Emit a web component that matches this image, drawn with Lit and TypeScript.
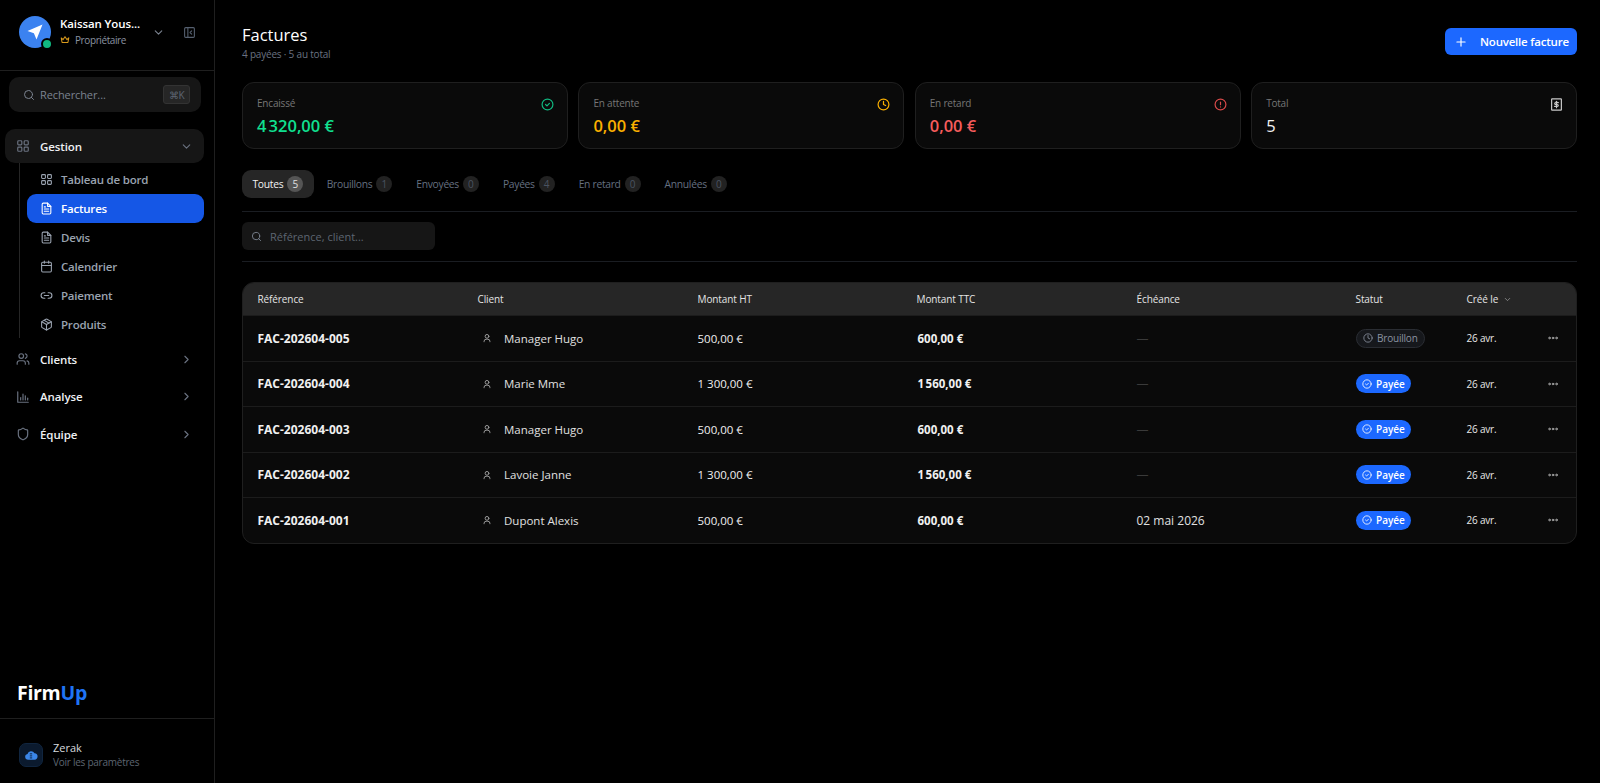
import { LitElement, html, css, svg } from "lit";
import { customElement } from "lit/decorators.js";

const ic = (paths: any, size = 14, sw = 2, cls = "") =>
  html`<svg class=${cls} width=${size} height=${size} viewBox="0 0 24 24" fill="none" stroke="currentColor" stroke-width=${sw} stroke-linecap="round" stroke-linejoin="round">${paths}</svg>`;

const P = {
  grid: svg`<rect x="3" y="3" width="7" height="7" rx="1.5"/><rect x="14" y="3" width="7" height="7" rx="1.5"/><rect x="3" y="14" width="7" height="7" rx="1.5"/><rect x="14" y="14" width="7" height="7" rx="1.5"/>`,
  file: svg`<path d="M14 2H6a2 2 0 0 0-2 2v16a2 2 0 0 0 2 2h12a2 2 0 0 0 2-2V8z"/><path d="M14 2v6h6"/><path d="M16 13H8"/><path d="M16 17H8"/><path d="M10 9H8"/>`,
  cal: svg`<path d="M8 2v4"/><path d="M16 2v4"/><rect x="3" y="4" width="18" height="18" rx="2"/><path d="M3 10h18"/>`,
  link: svg`<path d="M9 17H7A5 5 0 0 1 7 7h2"/><path d="M15 7h2a5 5 0 1 1 0 10h-2"/><line x1="8" y1="12" x2="16" y2="12"/>`,
  box: svg`<path d="M21 8a2 2 0 0 0-1-1.73l-7-4a2 2 0 0 0-2 0l-7 4A2 2 0 0 0 3 8v8a2 2 0 0 0 1 1.73l7 4a2 2 0 0 0 2 0l7-4A2 2 0 0 0 21 16z"/><path d="m3.3 7 8.7 5 8.7-5"/><path d="M12 22V12"/><path d="m7.5 4.27 9 5.15"/>`,
  users: svg`<path d="M16 21v-2a4 4 0 0 0-4-4H6a4 4 0 0 0-4 4v2"/><circle cx="9" cy="7" r="4"/><path d="M22 21v-2a4 4 0 0 0-3-3.87"/><path d="M16 3.13a4 4 0 0 1 0 7.75"/>`,
  chart: svg`<path d="M3 3v18h18"/><path d="M8 17v-4"/><path d="M12 17V7"/><path d="M16 17v-7"/><path d="M20 17v-3"/>`,
  shield: svg`<path d="M20 13c0 5-3.5 7.5-7.66 8.95a1 1 0 0 1-.67-.01C7.5 20.5 4 18 4 13V6a1 1 0 0 1 1-1c2 0 4.5-1.2 6.24-2.72a1.17 1.17 0 0 1 1.52 0C14.51 3.81 17 5 19 5a1 1 0 0 1 1 1z"/>`,
  down: svg`<path d="m6 9 6 6 6-6"/>`,
  right: svg`<path d="m9 18 6-6-6-6"/>`,
  search: svg`<circle cx="11" cy="11" r="8"/><path d="m21 21-4.3-4.3"/>`,
  panel: svg`<rect x="3" y="3" width="18" height="18" rx="2"/><path d="M9 3v18"/><path d="m16 15-3-3 3-3"/>`,
  check: svg`<circle cx="12" cy="12" r="10"/><path d="m8.5 12 2.5 2.5 4.5-4.500"/>`,
  clock: svg`<circle cx="12" cy="12" r="10"/><path d="M12 6v6l4 2"/>`,
  alert: svg`<circle cx="12" cy="12" r="10"/><line x1="12" y1="7.5" x2="12" y2="12.5"/><line x1="12" y1="16.5" x2="12.01" y2="16.5"/>`,
  bill: svg`<rect x="3" y="1.500" width="18" height="21" rx="1"/><path d="M15.500 8.500H10.500a1.750 1.750 0 0 0 0 3.500h3a1.750 1.750 0 0 1 0 3.500H8.500"/><path d="M12 6v12"/>`,
  plus: svg`<path d="M5 12h14"/><path d="M12 5v14"/>`,
  user: svg`<circle cx="12" cy="8" r="4.500"/><path d="M5 21v-1a5 5 0 0 1 5-5h4a5 5 0 0 1 5 5v1"/>`,
  more: svg`<circle cx="5" cy="12" r="1.600"/><circle cx="12" cy="12" r="1.600"/><circle cx="19" cy="12" r="1.600"/>`,
};

const SUB = [
  ["Tableau de bord", P.grid, false],
  ["Factures", P.file, true],
  ["Devis", P.file, false],
  ["Calendrier", P.cal, false],
  ["Paiement", P.link, false],
  ["Produits", P.box, false],
] as const;

const CARDS = [
  ["Encaissé", "4\u202f320,00 €", "green", P.check],
  ["En attente", "0,00 €", "orange", P.clock],
  ["En retard", "0,00 €", "red", P.alert],
  ["Total", "5", "white", P.bill],
] as const;

const TABS = [
  ["Toutes", 5],
  ["Brouillons", 1],
  ["Envoyées", 0],
  ["Payées", 4],
  ["En retard", 0],
  ["Annulées", 0],
] as const;

const ROWS = [
  ["FAC-202604-005", "Manager Hugo", "500,00 €", "600,00 €", "—", false],
  ["FAC-202604-004", "Marie Mme", "1 300,00 €", "1\u202f560,00 €", "—", true],
  ["FAC-202604-003", "Manager Hugo", "500,00 €", "600,00 €", "—", true],
  ["FAC-202604-002", "Lavoie Janne", "1 300,00 €", "1\u202f560,00 €", "—", true],
  ["FAC-202604-001", "Dupont Alexis", "500,00 €", "600,00 €", "02 mai 2026", true],
] as const;

@customElement("app-root")
export class AppRoot extends LitElement {
  static styles = css`
    :host {
      display: flex;
      width: 100%;
      height: 783px;
      background: #000;
      color: #fff;
      font-family: "Open Sans", "Noto Sans", "Liberation Sans", sans-serif;
      overflow: hidden;
    }
    svg { flex: none; display: block; }
    .side {
      width: 215px;
      flex: none;
      box-sizing: border-box;
      border-right: 1px solid #1f1f1f;
      display: flex;
      flex-direction: column;
    }
    .user {
      height: 71px;
      box-sizing: border-box;
      border-bottom: 1px solid #1f1f1f;
      display: flex;
      align-items: center;
      padding: 0 0 6px 19px;
    }
    .avatar {
      width: 32px;
      height: 32px;
      border-radius: 50%;
      background: #3b82f0;
      position: relative;
      display: flex;
      align-items: center;
      justify-content: center;
      flex: none;
    }
    .dot {
      position: absolute;
      right: -2px;
      bottom: -2px;
      width: 8px;
      height: 8px;
      border-radius: 50%;
      background: #10b981;
      border: 2px solid #000;
    }
    .uinfo { margin-left: 9px; width: 92px; }
    .uname { font-size: 11.5px; font-weight: 600; line-height: 16px; white-space: nowrap; letter-spacing: -0.1px; }
    .urole { font-size: 10px; color: #8b93a1; display: flex; align-items: center; gap: 5px; line-height: 16px; letter-spacing: -0.4px; }
    .crown { color: #d99a1c; }
    .uchev { color: #7b8390; margin-left: 0; }
    .upanel { color: #566070; margin-left: 18px; }
    .sbox {
      margin: 6px 13px 0 9px;
      height: 35px;
      box-sizing: border-box;
      background: #161616;
      border-radius: 10px;
      display: flex;
      align-items: center;
      padding: 0 11px 0 14px;
      color: #7b8390;
      font-size: 11px;
      letter-spacing: -0.1px;
      gap: 5px;
    }
    .kbd {
      margin-left: auto;
      width: 27px;
      height: 19px;
      box-sizing: border-box;
      border: 1px solid #333;
      border-radius: 3px;
      background: #262626;
      color: #5d6571;
      font-size: 10px;
      display: flex;
      align-items: center;
      justify-content: center;
    }
    .nav { margin: 17px 10px 0 5px; display: flex; flex-direction: column; }
    .group {
      height: 34px;
      display: flex;
      align-items: center;
      padding: 0 11px 0 11px;
      border-radius: 10px;
      font-size: 11.5px;
      font-weight: 600;
      letter-spacing: -0.1px;
      color: #eef0f3;
      gap: 10px;
      flex: none;
    }
    .group.open { background: #161616; }
    .group .gi { color: #6a7280; }
    .group .ch { margin-left: auto; color: #6a7280; }
    .gsp { height: 37.5px; }
    .subs {
      margin-left: 14px;
      border-left: 1px solid #262626;
      padding: 2px 0 0 7px;
      height: 175px;
      box-sizing: border-box;
      margin-bottom: 2.500px;
      display: flex;
      flex-direction: column;
    }
    .sub {
      height: 29px;
      flex: none;
      box-sizing: border-box;
      display: flex;
      align-items: center;
      gap: 8px;
      padding-left: 13px;
      border-radius: 9px;
      font-size: 11.5px;
      font-weight: 600;
      letter-spacing: -0.2px;
      color: #9aa3b0;
    }
    .sub.on { background: #1557e6; color: #fff; }
    .logo {
      margin-top: auto;
      padding: 0 0 11px 17px;
      font-size: 19.5px;
      font-weight: 700;
      line-height: 28px;
      letter-spacing: -0.3px;
    }
    .logo span { color: #1f74f5; }
    .foot {
      height: 65px;
      box-sizing: border-box;
      border-top: 1px solid #1f1f1f;
      display: flex;
      align-items: center;
      padding: 8px 0 0 19px;
      gap: 10px;
    }
    .ficon {
      width: 24px;
      height: 24px;
      border-radius: 7px;
      background: #0b1a2e;
      border: 1px solid #10253f;
      box-sizing: border-box;
      display: flex;
      align-items: center;
      justify-content: center;
      color: #3b86e8;
    }
    .fname { font-size: 11px; color: #d6d9de; line-height: 14px; font-weight: 500; }
    .fsub { font-size: 10px; color: #5d6571; line-height: 14px; letter-spacing: -0.25px; }

    .main {
      flex: 1;
      min-width: 0;
      padding: 0 23px 0 27px;
      display: flex;
      flex-direction: column;
    }
    .top { display: flex; justify-content: space-between; align-items: flex-start; padding-top: 23px; height: 82px; box-sizing: border-box; }
    h1 { margin: 0; font-size: 16.5px; font-weight: 500; line-height: 24px; }
    .tsub { font-size: 10px; color: #6a7280; line-height: 14px; letter-spacing: -0.2px; }
    .btn {
      margin-top: 5px;
      width: 132px;
      height: 27px;
      box-sizing: border-box;
      background: #1c68ff;
      border-radius: 6px;
      display: flex;
      align-items: center;
      gap: 12px;
      padding-left: 9px;
      font-size: 11.5px;
      font-weight: 600;
      letter-spacing: -0.2px;
      white-space: nowrap;
    }
    .cards { display: grid; grid-template-columns: repeat(4, 1fr); gap: 10.5px; }
    .card {
      height: 67px;
      box-sizing: border-box;
      background: #0a0a0a;
      border: 1px solid #1f1f1f;
      border-radius: 12px;
      padding: 13px 13px 13px 14px;
      display: flex;
      justify-content: space-between;
    }
    .clabel { font-size: 10px; color: #767676; line-height: 14px; letter-spacing: -0.2px; }
    .cval { font-size: 16.5px; font-weight: 600; line-height: 22px; margin-top: 5px; white-space: nowrap; }
    .cval.white { font-weight: 500; }
    .green { color: #10e090; }
    .orange { color: #fbb000; }
    .red { color: #f55c5c; }
    .white { color: #f2f2f2; }
    .cardic { margin-top: 2px; }
    .card .green.cardic { color: #10b981; }
    .card .red.cardic { color: #d94a4a; }
    .card .white.cardic { color: #c8c8c8; }
    .tabs {
      margin-top: 21px;
      padding-bottom: 13px;
      border-bottom: 1px solid #1a1d22;
      display: flex;
      gap: 2px;
    }
    .tab {
      height: 28px;
      box-sizing: border-box;
      padding: 0 11px;
      border-radius: 9px;
      display: flex;
      align-items: center;
      gap: 4px;
      font-size: 10.300px;
      letter-spacing: -0.3px;
      color: #667080;
      white-space: nowrap;
    }
    .tab.on { background: #262626; color: #f2f2f2; font-weight: 500; padding: 0 10.500px; }
    .cnt {
      width: 16px;
      height: 16px;
      border-radius: 50%;
      background: #222;
      color: #4a5361;
      font-size: 10px;
      letter-spacing: 0;
      display: flex;
      align-items: center;
      justify-content: center;
    }
    .tab.on .cnt { background: #555; color: #e0e0e0; }
    .filter {
      padding: 10px 0 11px;
      border-bottom: 1px solid #1a1d22;
    }
    .fbox {
      width: 193px;
      height: 28px;
      box-sizing: border-box;
      background: #161616;
      border-radius: 6px;
      display: flex;
      align-items: center;
      gap: 8px;
      padding-left: 9px;
      color: #5d6571;
      font-size: 11px;
    }
    .fbox svg { color: #7b8390; }
    .table {
      margin-top: 20px;
      border: 1px solid #1f1f1f;
      border-radius: 12px;
      overflow: hidden;
      background: #0a0a0a;
    }
    .row {
      display: grid;
      grid-template-columns: 220px 220px 219px 220px 219px 111px 80px 1fr;
      padding-left: 14.5px;
      align-items: center;
      height: 45.5px;
      box-sizing: border-box;
      border-top: 1px solid #1c1c1c;
      font-size: 12px;
      color: #f0f0f0;
    }
    .row.head {
      height: 32px;
      border-top: none;
      background: #262626;
      font-size: 10px;
      letter-spacing: -0.1px;
      color: #e4e4e4;
    }
    .ref { font-weight: 700; font-size: 12px; }
    .client { display: flex; align-items: center; gap: 12px; padding-left: 4.5px; color: #e0e0e0; font-size: 11.5px; }
    .client svg { color: #999; }
    .ttc { font-weight: 700; font-size: 11.5px; padding-left: 1px; }
    .ht { font-size: 11.5px; }
    .dash { color: #3a3a3a; }
    .date { font-size: 12px; color: #e0e0e0; }
    .badge {
      display: inline-flex;
      align-items: center;
      height: 19px;
      box-sizing: border-box;
      gap: 4px;
      padding: 0 6.500px;
      border-radius: 10px;
      font-size: 10px;
      font-weight: 600;
      width: max-content;
    }
    .badge.paid { background: #1c68ff; color: #fff; }
    .badge.draft { background: #16181c; border: 1px solid #2a2d33; color: #8b93a1; font-weight: 500; letter-spacing: -0.2px; }
    .created { font-size: 10px; color: #e8e8e8; letter-spacing: -0.2px; }
    .hsort { display: flex; align-items: center; gap: 5px; }
    .hsort svg { color: #999; }
    .more { color: #aaa; }
  `;

  render() {
    return html`
      <aside class="side">
        <div class="user">
          <div class="avatar">
            <svg width="18" height="18" viewBox="0 0 24 24" fill="#fff"><path d="M22 2 2 10.500l8.500 3L14 22z"/></svg>
            <span class="dot"></span>
          </div>
          <div class="uinfo">
            <div class="uname">Kaissan Yous...</div>
            <div class="urole">
              ${ic(svg`<path d="M3 7l4.500 4L12 4l4.500 7L21 7l-2 11H5z"/>`, 10, 2.5, "crown")}
              Propriétaire
            </div>
          </div>
          ${ic(P.down, 13, 2, "uchev")}
          ${ic(P.panel, 13, 2, "upanel")}
        </div>
        <div class="sbox">
          ${ic(P.search, 12)}
          <span>Rechercher...</span>
          <span class="kbd">⌘K</span>
        </div>
        <nav class="nav">
          <div class="group open">
            <span class="gi">${ic(P.grid)}</span>Gestion
            <span class="ch">${ic(P.down, 13)}</span>
          </div>
          <div class="subs">
            ${SUB.map(
              ([t, p, on]) => html`<div class="sub ${on ? "on" : ""}">${ic(p, 13)}${t}</div>`
            )}
          </div>
          ${[
            ["Clients", P.users],
            ["Analyse", P.chart],
            ["Équipe", P.shield],
          ].map(
            ([t, p]) => html`<div class="group gsp">
              <span class="gi">${ic(p)}</span>${t}
              <span class="ch">${ic(P.right, 13)}</span>
            </div>`
          )}
        </nav>
        <div class="logo">Firm<span>Up</span></div>
        <div class="foot">
          <div class="ficon">
            <svg width="14" height="14" viewBox="0 0 24 24" fill="currentColor"><path d="M7 20a5 5 0 0 1-1-9.900A6.500 6.500 0 0 1 18 9a5.500 5.500 0 0 1-.5 11z"/><path d="M10 10h4M10 13.500h4M10 17h4" stroke="#0b1a2e" stroke-width="1.500"/></svg>
          </div>
          <div>
            <div class="fname">Zerak</div>
            <div class="fsub">Voir les paramètres</div>
          </div>
        </div>
      </aside>
      <main class="main">
        <div class="top">
          <div>
            <h1>Factures</h1>
            <div class="tsub">4 payées · 5 au total</div>
          </div>
          <div class="btn">${ic(P.plus, 14)}Nouvelle facture</div>
        </div>
        <div class="cards">
          ${CARDS.map(
            ([l, v, c, p]) => html`<div class="card">
              <div>
                <div class="clabel">${l}</div>
                <div class="cval ${c}">${v}</div>
              </div>
              <span class="${c} cardic">${ic(p, 13, 2.2)}</span>
            </div>`
          )}
        </div>
        <div class="tabs">
          ${TABS.map(
            ([t, n], i) => html`<div class="tab ${i === 0 ? "on" : ""}">${t}<span class="cnt">${n}</span></div>`
          )}
        </div>
        <div class="filter">
          <div class="fbox">${ic(P.search, 11)}<span>Référence, client...</span></div>
        </div>
        <div class="table">
          <div class="row head">
            <span>Référence</span><span>Client</span><span>Montant HT</span><span>Montant TTC</span>
            <span>Échéance</span><span>Statut</span>
            <span class="hsort">Créé le ${ic(P.down, 9)}</span><span></span>
          </div>
          ${ROWS.map(
            ([r, c, ht, ttc, d, paid]) => html`<div class="row">
              <span class="ref">${r}</span>
              <span class="client">${ic(P.user, 10, 2.4)}${c}</span>
              <span class="ht">${ht}</span>
              <span class="ttc">${ttc}</span>
              <span class="${d === "—" ? "dash" : "date"}">${d}</span>
              <span>
                ${paid
                  ? html`<span class="badge paid">${ic(P.check, 10)}Payée</span>`
                  : html`<span class="badge draft">${ic(P.clock, 10)}Brouillon</span>`}
              </span>
              <span class="created">26 avr.</span>
              <span class="more">${ic(P.more, 12)}</span>
            </div>`
          )}
        </div>
      </main>
    `;
  }
}
